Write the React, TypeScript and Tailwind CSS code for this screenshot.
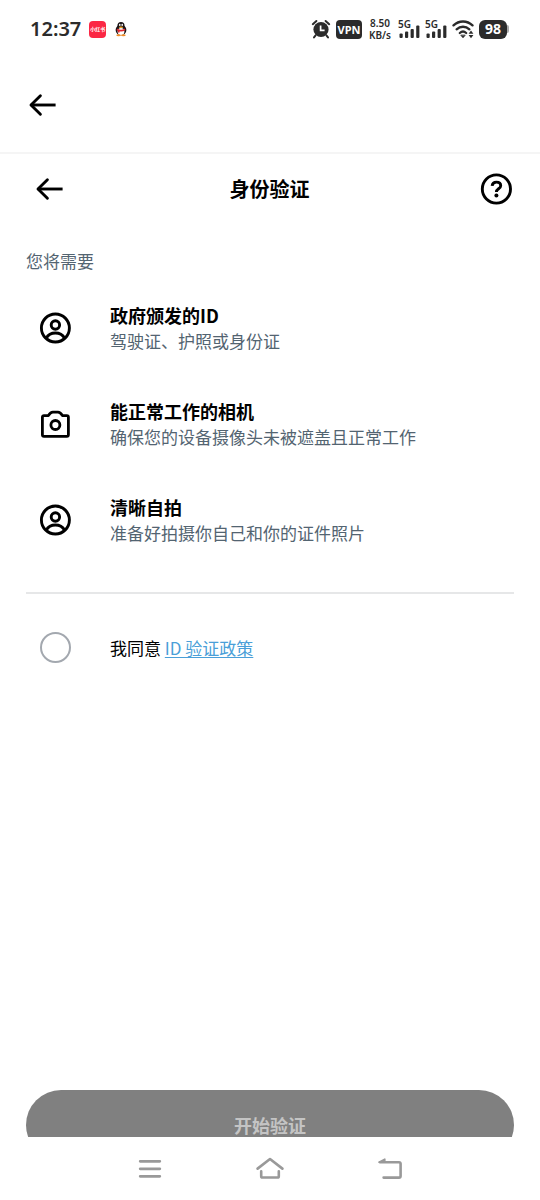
import { useState } from "react";

const REQUIREMENTS = [
  { id: "gov-id", icon: UserIcon, title: "政府颁发的ID", detail: "驾驶证、护照或身份证" },
  { id: "camera", icon: CameraIcon, title: "能正常工作的相机", detail: "确保您的设备摄像头未被遮盖且正常工作" },
  { id: "selfie", icon: UserIcon, title: "清晰自拍", detail: "准备好拍摄你自己和你的证件照片" },
];

function ArrowIcon() {
  return (
    <svg viewBox="0 0 28 24" className="w-7 h-6" fill="none" stroke="currentColor" strokeWidth="2.9" strokeLinecap="round" strokeLinejoin="round">
      <path d="M12.4 2.8 3 12l9.4 9.2" />
      <path d="M3 12h24.6" strokeLinecap="butt" />
    </svg>
  );
}

function HelpIcon() {
  return (
    <svg viewBox="0 0 32 32" className="w-8 h-8" fill="none" stroke="currentColor" strokeWidth="2.9">
      <circle cx="16.4" cy="16" r="14.1" />
      <path d="M12.1 12.9c.3-2.3 2-3.8 4.3-3.8 2.5 0 4.3 1.4 4.3 3.6 0 3.1-4.3 3.1-4.3 6.3" />
      <circle cx="16.4" cy="22.6" r="2" fill="currentColor" stroke="none" />
    </svg>
  );
}

function UserIcon() {
  return (
    <svg viewBox="0 0 32 32" className="w-8 h-8" fill="none" stroke="currentColor" strokeWidth="2.9">
      <circle cx="16.4" cy="16" r="14" />
      <circle cx="16.4" cy="13" r="4.2" />
      <path d="M7.2 26.2c2-3.6 5.4-5.2 9.2-5.2s7.2 1.6 9.2 5.2" />
    </svg>
  );
}

function CameraIcon() {
  return (
    <svg viewBox="0 0 32 32" className="w-8 h-8" fill="none" stroke="currentColor" strokeWidth="2.8" strokeLinejoin="round">
      <path d="M5 7.6h4.4c1.4-2.2 3-3.4 4.4-3.4h5.2c1.4 0 3 1.2 4.4 3.4h4.4c1 0 1.6.6 1.6 1.6v17.6c0 1-.6 1.6-1.6 1.6H5c-1 0-1.6-.6-1.6-1.6V9.2c0-1 .6-1.6 1.6-1.6z" />
      <circle cx="16.4" cy="17" r="4.5" />
    </svg>
  );
}

function SignalIcon() {
  return (
    <span className="relative flex w-[22px] h-5">
      <span className="absolute left-0 top-0 text-[10px] leading-[10px] font-semibold">5G</span>
      <svg viewBox="0 0 22 20" className="w-[22px] h-5" fill="currentColor">
        <rect x="1.5" y="14.4" width="3.2" height="4.5" rx="1" />
        <rect x="7" y="12.6" width="3.2" height="6.3" rx="1" />
        <rect x="12.6" y="9.9" width="3.2" height="9" rx="1" />
        <rect x="18.2" y="6.4" width="3.2" height="12.5" rx="1" />
      </svg>
    </span>
  );
}

function StatusBar() {
  return (
    <div className="flex shrink-0 items-center justify-between h-[58px] pl-[30px] pr-[31px] text-[#2b2b2b] font-['Noto_Sans','Noto_Sans_CJK_SC',sans-serif]">
      <div className="flex items-center">
        <span className="text-xl font-semibold">12:37</span>
        <span className="flex items-center justify-center ml-2 w-[17px] h-[17px] rounded bg-[#fb2744] text-white text-[5px] leading-none font-bold">
          小红书
        </span>
        <svg viewBox="0 0 14 16" className="ml-2 w-3.5 h-4">
          <ellipse cx="7" cy="9" rx="5.4" ry="5.2" fill="#1b1416" />
          <ellipse cx="7" cy="5" rx="3.6" ry="4" fill="#1b1416" />
          <ellipse cx="7" cy="10.6" rx="3.4" ry="3.6" fill="#fff" />
          <path d="M3 7.6c2.4 1.6 5.6 1.6 8 0l.3 1.6c-2.6 1.7-6 1.7-8.6 0z" fill="#e0262f" />
          <path d="M4 8.6v2.8h1.6V9z" fill="#e0262f" />
          <ellipse cx="5.8" cy="3.9" rx=".8" ry="1.1" fill="#fff" />
          <ellipse cx="8.2" cy="3.9" rx=".8" ry="1.1" fill="#fff" />
          <ellipse cx="7" cy="6.2" rx="2.2" ry=".8" fill="#f5a623" />
          <ellipse cx="4.6" cy="14.3" rx="2.3" ry="1" fill="#f08a24" />
          <ellipse cx="9.4" cy="14.3" rx="2.3" ry="1" fill="#f08a24" />
        </svg>
      </div>

      <div className="flex items-center gap-[5px]">
        <svg viewBox="0 0 20 20" className="w-5 h-5" fill="none" stroke="currentColor">
          <circle cx="10" cy="10.5" r="7.6" fill="currentColor" stroke="none" />
          <path d="M1.8 5.2 5.4 2M18.2 5.2 14.6 2M4.6 16.4l-1.6 2M15.4 16.4l1.6 2" strokeWidth="2" strokeLinecap="round" />
          <path d="M9.6 6.4v5h4" stroke="#fff" strokeWidth="1.7" />
        </svg>
        <span className="flex items-center justify-center w-[26px] h-[19px] rounded bg-[#2b2b2b] text-white text-[11px] leading-none font-bold">
          VPN
        </span>
        <span className="flex flex-col items-center w-[26px] text-[10px] leading-3 font-semibold">
          <span>8.50</span>
          <span>KB/s</span>
        </span>
        <SignalIcon />
        <SignalIcon />
        <svg viewBox="0 0 22 20" className="w-[22px] h-5" fill="none" stroke="currentColor" strokeWidth="2.3" strokeLinecap="round">
          <path d="M1.5 6.4c5.4-5.2 13.6-5.2 19 0" />
          <path d="M4.6 10.3c3.7-3.4 9.1-3.4 12.8 0" />
          <path d="M7.8 14c1.9-1.7 4.5-1.7 6.4 0" />
          <path d="m9 16.4 2 2.4 2-2.4z" fill="currentColor" strokeWidth=".8" />
          <path d="m19 11.6 2.4 3.2h-4.8zM19 19.2l2.4-3.2h-4.8z" fill="currentColor" stroke="none" />
        </svg>
        <span className="flex items-center">
          <span className="flex items-center justify-center w-7 h-[19px] rounded-md bg-[#2b2b2b] text-white text-sm leading-none font-bold">
            98
          </span>
          <span className="w-0.5 h-2 rounded-r bg-[#aaaaaa]" />
        </span>
      </div>
    </div>
  );
}

function NavBar() {
  return (
    <nav className="flex shrink-0 items-center justify-center gap-[92px] h-[63px] bg-white text-[#999999]">
      <button type="button" aria-label="最近任务">
        <svg viewBox="0 0 28 28" className="w-7 h-7" stroke="currentColor" strokeWidth="2.8" strokeLinecap="round">
          <path d="M4.2 6.3h19.6M4.2 13.8h19.6M4.2 21.3h19.6" />
        </svg>
      </button>
      <button type="button" aria-label="主屏幕">
        <svg viewBox="0 0 28 28" className="w-7 h-7" fill="none" stroke="currentColor" strokeWidth="2.6" strokeLinecap="round" strokeLinejoin="round">
          <path d="M1.6 13.6 14 4 26.4 13.6" />
          <path d="M5.2 16.4v4.8c0 .8.5 1.3 1.3 1.3h15c.8 0 1.3-.5 1.3-1.3v-4.8" />
        </svg>
      </button>
      <button type="button" aria-label="返回">
        <svg viewBox="0 0 28 28" className="w-7 h-7" fill="none" stroke="currentColor" strokeWidth="2.6" strokeLinecap="round" strokeLinejoin="round">
          <path d="M4 7.2h19c1 0 1.6.6 1.6 1.6v12.2c0 1-.6 1.6-1.6 1.6H7.6" />
          <path d="M3 7.2 8.8 4.2v3z" fill="currentColor" strokeWidth="1.6" />
        </svg>
      </button>
    </nav>
  );
}

export default function App() {
  const [agreed, setAgreed] = useState(false);

  return (
    <div className="flex flex-col h-screen bg-white text-black font-['Noto_Sans_CJK_SC',sans-serif]">
      <StatusBar />

      <div className="flex shrink-0 items-center h-24 px-7 border-b-2 border-[#f5f5f5]">
        <button type="button" aria-label="返回">
          <ArrowIcon />
        </button>
      </div>

      <header className="flex shrink-0 items-center justify-between h-[70px] pl-[35px] pr-7">
        <button type="button" aria-label="返回上一步">
          <ArrowIcon />
        </button>
        <h1 className="pr-1 text-xl font-bold">身份验证</h1>
        <button type="button" aria-label="帮助">
          <HelpIcon />
        </button>
      </header>

      <main className="flex flex-1 flex-col min-h-0 overflow-hidden px-[26px] pt-6">
        <h2 className="text-[17px] leading-[26px] text-[#536471]">您将需要</h2>

        <ul className="flex flex-col gap-11 mt-7">
          {REQUIREMENTS.map(({ id, icon: Icon, title, detail }) => (
            <li key={id} className="flex items-center gap-[39px] pl-[13px]">
              <Icon />
              <div>
                <h3 className="text-lg leading-[26px] font-bold">{title}</h3>
                <p className="text-[17px] leading-[26px] text-[#536471]">{detail}</p>
              </div>
            </li>
          ))}
        </ul>

        <hr className="mt-[46px] border-t-2 border-[#e6e7e8]" />

        <div className="flex items-center gap-[39px] mt-[38px] pl-3.5">
          <input
            id="agree"
            type="checkbox"
            checked={agreed}
            onChange={(e) => setAgreed(e.target.checked)}
            className="appearance-none w-[31px] h-[31px] rounded-full border-2 border-[#a3a8af] checked:bg-black"
          />
          <p className="text-[17px] leading-[26px]">
            <label htmlFor="agree">我同意</label>{" "}
            <a href="#policy" className="text-[#4a9fd8] underline underline-offset-2">
              ID 验证政策
            </a>
          </p>
        </div>

        {/* the button runs past the fold and is cut by the nav bar */}
        <div className="mt-auto h-[47px]">
          <button
            type="button"
            disabled={!agreed}
            className="w-full h-[70px] rounded-full bg-black disabled:bg-[#808080] text-white disabled:text-[#c4c4c4] text-lg font-bold"
          >
            开始验证
          </button>
        </div>
      </main>

      <NavBar />
    </div>
  );
}
